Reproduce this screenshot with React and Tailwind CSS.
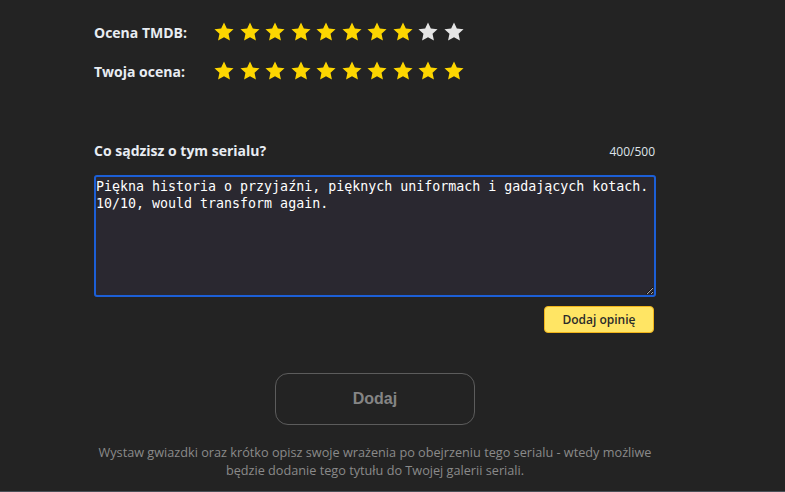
import React, { useState } from "react";

const Star = ({ filled }) => (
  <svg viewBox="0 0 24 24" className="w-[22px] h-[22px]">
    <path
      d="M12 1.6l3.1 6.7 7.3.8-5.45 4.93 1.52 7.2L12 17.6l-6.47 3.63 1.52-7.2L1.6 9.1l7.3-.8z"
      fill={filled ? "#fdd600" : "#e4e4e4"}
    />
  </svg>
);

const StarRow = ({ label, value }) => (
  <div className="flex items-center">
    <span className="w-[119px] text-[14px] font-bold text-[#e8ecf2]">{label}</span>
    <div className="flex gap-[3.5px]">
      {Array.from({ length: 10 }).map((_, i) => (
        <Star key={i} filled={i < value} />
      ))}
    </div>
  </div>
);

export default function App() {
  const [text, setText] = useState(
    "Piękna historia o przyjaźni, pięknych uniformach i gadających kotach. 10/10, would transform again. "
  );

  return (
    <div
      className="w-[785px] h-[492px] bg-[#232323] border-b border-[#4a5058] overflow-hidden"
      style={{ fontFamily: '"Open Sans", "Noto Sans", sans-serif' }}
    >
      <div className="ml-[94px] w-[562px] pt-[21px]">
        {/* Ratings */}
        <div className="flex flex-col gap-[17px]">
          <StarRow label="Ocena TMDB:" value={8} />
          <StarRow label="Twoja ocena:" value={10} />
        </div>

        {/* Opinion */}
        <div className="mt-[58px] flex items-end justify-between">
          <span className="text-[14px] font-bold text-[#e8ecf2]">Co sądzisz o tym serialu?</span>
          <span className="text-[12px] text-[#dfe3ea] pr-[1px]">400/500</span>
        </div>

        <textarea
          value={text}
          onChange={(e) => setText(e.target.value)}
          className="mt-[14px] block w-[562px] h-[122px] bg-[#2a2830] text-white text-[13.3px] leading-[17px] px-0 py-[1px] rounded-[3px] border-2 border-[#1c5fd6] outline-none"
          style={{ fontFamily: '"DejaVu Sans Mono", "Liberation Mono", monospace' }}
        />

        <div className="flex justify-end mt-[9px]">
          <button className="w-[110px] h-[27px] bg-[#ffe564] border border-[#f0b41a] rounded-[4px] text-[12px] font-semibold text-[#2a2a2a] mr-[2px]">
            Dodaj opinię
          </button>
        </div>

        {/* Submit */}
        <div className="flex justify-center mt-[40px]">
          <button
            className="w-[200px] h-[52px] border border-[#5c5c5c] rounded-[13px] text-[16px] font-bold text-[#858585]"
            style={{ fontFamily: '"Liberation Sans", Arial, sans-serif' }}
          >
            Dodaj
          </button>
        </div>

        <p className="mt-[18px] -mx-[10px] text-center text-[12.7px] leading-[18px] text-[#8a8a8a]">
          Wystaw gwiazdki oraz krótko opisz swoje wrażenia po obejrzeniu tego serialu - wtedy możliwe
          <br />
          będzie dodanie tego tytułu do Twojej galerii seriali.
        </p>
      </div>
    </div>
  );
}
